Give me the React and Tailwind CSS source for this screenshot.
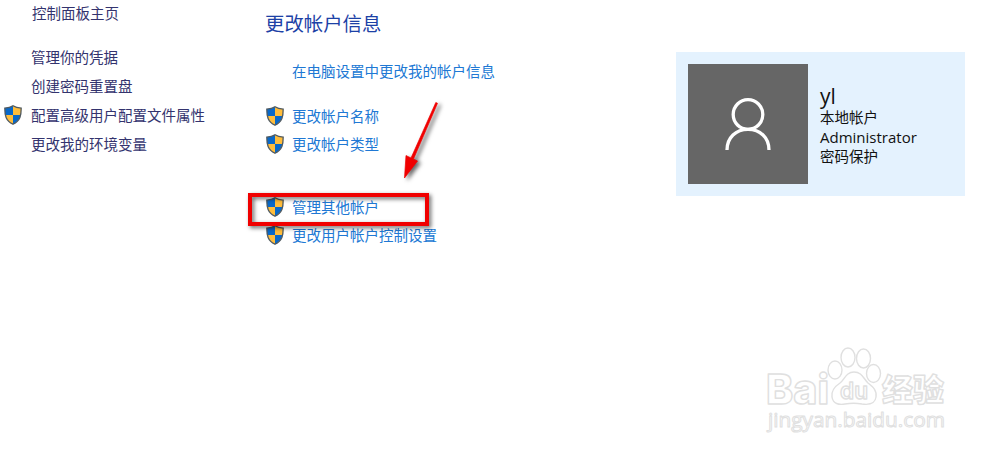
import React from "react";

function Shield() {
  return (
    <svg viewBox="0 0 18 20" className="relative -top-px h-5 w-[18px] shrink-0">
      <defs>
        <clipPath id="shield-clip">
          <path d="M9 .8C6.8 2.3 4 3 .8 3.100C.8 10 1.500 15.700 9 19.200C16.500 15.700 17.200 10 17.200 3.100C14 3 11.200 2.300 9 .8Z" />
        </clipPath>
      </defs>
      <g clipPath="url(#shield-clip)">
        <rect width="9" height="10" fill="#0868c9" />
        <rect x="9" width="9" height="10" fill="#ffbd3b" />
        <rect y="10" width="9" height="10" fill="#ffbd3b" />
        <rect x="9" y="10" width="9" height="10" fill="#0868c9" />
      </g>
      <path
        d="M9 .8C6.800 2.300 4 3 .8 3.100C.8 10 1.500 15.700 9 19.200C16.500 15.700 17.200 10 17.200 3.100C14 3 11.200 2.300 9 .8Z"
        fill="none"
        stroke="#505a60"
        strokeWidth="1.300"
      />
    </svg>
  );
}

function SideLink({ children, shield }) {
  return (
    <a className="flex h-[29px] items-center">
      <span className="flex w-[27px] shrink-0">{shield && <Shield />}</span>
      {children}
    </a>
  );
}

function TaskLink({ children }) {
  return (
    <a className="flex h-7 items-center gap-2">
      <Shield />
      {children}
    </a>
  );
}

function Watermark() {
  return (
    <svg
      viewBox="0 0 205 110"
      className="absolute left-[755px] top-[335px] h-[110px] w-[205px]"
      fill="#fff"
      stroke="#e0e0e0"
      strokeWidth="1.400"
      strokeLinejoin="round"
    >
      <ellipse cx="93" cy="22.500" rx="7" ry="9.500" />
      <ellipse cx="108.500" cy="23.500" rx="7" ry="9.500" />
      <ellipse cx="80" cy="35" rx="7" ry="9" />
      <ellipse cx="118.500" cy="38.500" rx="7" ry="9" />
      <path d="M99 37C91 37 90 44 85 48C79 52 76 56 77 62C78 69 84 70 90 69C96 68 101 68 107 69C114 70 120 69 121 62C122 55 118 52 113 48C108 43 107 37 99 37Z" />
      <g className="font-['Inter','Noto_Sans_CJK_SC',sans-serif] font-extrabold">
        <text x="11" y="68.500" fontSize="41" textLength="63" lengthAdjust="spacingAndGlyphs">Bai</text>
        <text x="85" y="64" fontSize="23" textLength="28" lengthAdjust="spacingAndGlyphs" className="font-semibold">du</text>
        <text x="127" y="66" fontSize="31" textLength="62" lengthAdjust="spacingAndGlyphs">经验</text>
      </g>
      <text
        x="13"
        y="92"
        fontSize="20"
        textLength="177"
        lengthAdjust="spacingAndGlyphs"
        className="font-['Open_Sans',sans-serif] font-medium"
        strokeWidth="1"
      >
        jingyan.baidu.com
      </text>
    </svg>
  );
}

function Annotation() {
  return (
    <>
      <div className="pointer-events-none absolute left-[248px] top-[193px] h-[33px] w-[181px] border-4 border-[#f00000] drop-shadow-[2px_2px_2px_rgba(0,0,0,0.6)]" />
      <svg
        viewBox="0 0 50 90"
        className="pointer-events-none absolute left-[395px] top-[96px] h-[90px] w-[50px] drop-shadow-[3px_2px_2px_rgba(0,0,0,0.6)]"
        fill="#f00000"
      >
        <path d="M40.800 6.500L42.500 7.300L18.500 63L22.500 65L9.500 82L11 59.500L16 62Z" stroke="#f00000" strokeWidth=".7" />
      </svg>
    </>
  );
}

export default function App() {
  return (
    <main className="relative flex h-[455px] w-[1000px] overflow-hidden bg-white font-['Open_Sans','Noto_Sans_CJK_SC',sans-serif] text-[14.500px] leading-5">
      <nav className="w-[265px] shrink-0 pl-1 text-[#33336e]">
        <div className="flex h-[27px] items-center pl-7">控制面板主页</div>
        <div className="mt-4">
          <SideLink>管理你的凭据</SideLink>
          <SideLink>创建密码重置盘</SideLink>
          <SideLink shield>配置高级用户配置文件属性</SideLink>
          <SideLink>更改我的环境变量</SideLink>
        </div>
      </nav>

      <section className="w-[411px] shrink-0 text-[#2078d4]">
        <h1 className="flex h-12 items-center text-[19.400px] text-[#1c41a6]">更改帐户信息</h1>
        <a className="mt-[14px] flex h-5 items-center pl-[27px]">在电脑设置中更改我的帐户信息</a>
        <div className="mt-[21px] pl-px">
          <TaskLink>更改帐户名称</TaskLink>
          <TaskLink>更改帐户类型</TaskLink>
        </div>
        <div className="mt-[35px] pl-px">
          <TaskLink>管理其他帐户</TaskLink>
          <TaskLink>更改用户帐户控制设置</TaskLink>
        </div>
      </section>

      <aside className="mt-[52px] flex h-36 w-[289px] items-center bg-[#e4f2fe] pl-3 text-[#111]">
        <div className="flex size-[120px] shrink-0 items-center justify-center bg-[#666]">
          <svg viewBox="0 0 46 54" className="h-[54px] w-[46px]" fill="none" stroke="#fff" strokeWidth="3.300">
            <circle cx="23" cy="17.500" r="14.800" />
            <path d="M2 53C2 40.500 11 32.300 23 32.300S44 40.500 44 53" />
          </svg>
        </div>
        <div className="ml-3 flex flex-col pt-0.5">
          <span className="h-6 text-[21px] leading-6">yl</span>
          <span className="h-5">本地帐户</span>
          <span className="h-[19px] text-[15px] leading-[18px]">Administrator</span>
          <span className="h-5">密码保护</span>
        </div>
      </aside>

      <Annotation />
      <Watermark />
    </main>
  );
}
